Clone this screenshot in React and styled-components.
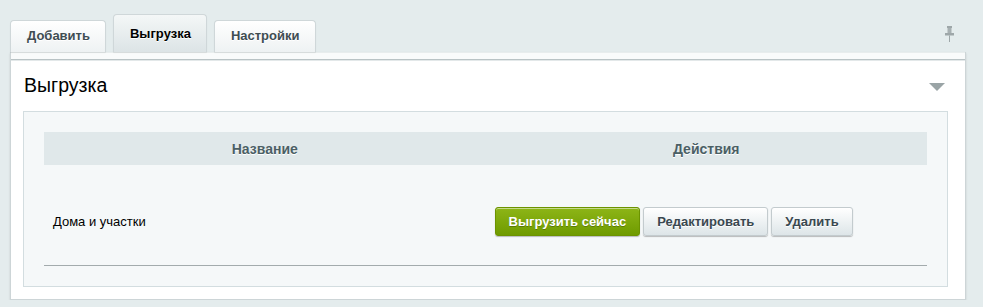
import React from 'react';
import styled, { createGlobalStyle } from 'styled-components';

const GlobalStyle = createGlobalStyle`
  html, body {
    margin: 0;
    padding: 0;
    background: #e4eced;
    font-family: 'Liberation Sans', Arial, sans-serif;
  }
`;

const Page = styled.div`
  padding: 14px 17px 0 10px;
`;

const TabBar = styled.div`
  display: flex;
  align-items: flex-end;
  gap: 7px;
  height: 38px;
`;

const Tab = styled.div`
  box-sizing: border-box;
  height: ${(p) => (p.$active ? 38 : 32)}px;
  padding: 0 15px ${(p) => (p.$active ? 1 : 3)}px 16px;
  display: flex;
  align-items: center;
  border: 1px solid #cfd7d9;
  border-bottom: none;
  border-radius: 4px 4px 0 0;
  background: ${(p) =>
    p.$active
      ? 'linear-gradient(to bottom, #f4f7f7 0%, #dce4e6 100%)'
      : 'linear-gradient(to bottom, #ffffff 0%, #eef2f3 100%)'};
  box-shadow: 0 1px 1px rgba(0, 0, 0, 0.08);
  font-size: 13px;
  font-weight: bold;
  color: ${(p) => (p.$active ? '#000' : '#3f4d52')};
  text-shadow: 0 1px #fff;
  cursor: pointer;
`;

const PinButton = styled.div`
  margin-left: auto;
  align-self: flex-start;
  margin-top: 12px;
  margin-right: 12px;
  width: 9px;
  height: 16px;
  display: flex;
`;

const Panel = styled.div`
  background: #fff;
  border: 1px solid #cdd5d7;
  border-top: none;
  box-shadow: 0 1px 2px rgba(0, 0, 0, 0.12);
`;

const PanelStrip = styled.div`
  height: 6px;
  background: #f9fbfb;
  border-top: 1px solid #e8eded;
  border-bottom: 1px solid #b9c3c5;
  box-shadow: 0 1px 0 #e3e8e9;
`;

const PanelHead = styled.div`
  display: flex;
  align-items: center;
  justify-content: space-between;
  height: 51px;
  padding: 0 20px 0 13px;
`;

const Title = styled.h2`
  margin: 0;
  margin-top: -1px;
  font-size: 19.5px;
  font-weight: normal;
  color: #000;
`;

const Collapse = styled.div`
  width: 0;
  height: 0;
  border-left: 8px solid transparent;
  border-right: 8px solid transparent;
  border-top: 8px solid #9aa4a6;
  margin-top: 2px;
`;

const Inner = styled.div`
  margin: 0 17px 12px 12px;
  padding: 20px;
  background: #f5f8f9;
  border: 1px solid #d3dde0;
`;

const Table = styled.table`
  width: 100%;
  border-collapse: collapse;
  font-size: 13px;
`;

const Th = styled.th`
  width: 50%;
  height: 33px;
  padding: 0 10px;
  background: #e0e8ea;
  color: #4b5f65;
  font-size: 14px;
  font-weight: bold;
  text-align: center;
  text-shadow: 0 1px #fff;
`;

const Td = styled.td`
  padding: 42px 9px 29px;
  border-bottom: 1px solid #a3abad;
  vertical-align: middle;
  color: #000;
`;

const Actions = styled.div`
  display: flex;
  gap: 3px;
`;

const Button = styled.button`
  box-sizing: border-box;
  height: 29px;
  padding: 0 ${(p) => (p.$primary ? 13 : 13)}px;
  border-radius: 3px;
  font-family: inherit;
  font-size: 13px;
  font-weight: bold;
  cursor: pointer;
  border: 1px solid ${(p) => (p.$primary ? '#6c9300' : '#c3cbce')};
  background: ${(p) =>
    p.$primary
      ? 'linear-gradient(to bottom, #8db517 0%, #6f9b00 100%)'
      : 'linear-gradient(to bottom, #ffffff 0%, #dde5e8 100%)'};
  color: ${(p) => (p.$primary ? '#fff' : '#3a4850')};
  text-shadow: ${(p) => (p.$primary ? '0 1px rgba(0,0,0,0.25)' : '0 1px #fff')};
  box-shadow: 0 1px 1px rgba(0, 0, 0, 0.25), inset 0 1px 0 rgba(255, 255, 255, 0.5);
`;

function PinIcon() {
  return (
    <svg width="9" height="16" viewBox="0 0 9 16">
      <rect x="2" y="0" width="5" height="2" fill="#9ea7a9" />
      <rect x="2.5" y="2" width="4" height="5" fill="#a7b0b2" />
      <rect x="0" y="7" width="9" height="2.5" fill="#9ea7a9" />
      <rect x="4" y="9.5" width="1" height="6.5" fill="#9ea7a9" />
    </svg>
  );
}

export default function App() {
  return (
    <>
      <GlobalStyle />
      <Page>
        <TabBar>
          <Tab>Добавить</Tab>
          <Tab $active>Выгрузка</Tab>
          <Tab>Настройки</Tab>
          <PinButton>
            <PinIcon />
          </PinButton>
        </TabBar>
        <Panel>
          <PanelStrip />
          <PanelHead>
            <Title>Выгрузка</Title>
            <Collapse />
          </PanelHead>
          <Inner>
            <Table>
              <thead>
                <tr>
                  <Th>Название</Th>
                  <Th>Действия</Th>
                </tr>
              </thead>
              <tbody>
                <tr>
                  <Td>Дома и участки</Td>
                  <Td>
                    <Actions>
                      <Button $primary>Выгрузить сейчас</Button>
                      <Button>Редактировать</Button>
                      <Button>Удалить</Button>
                    </Actions>
                  </Td>
                </tr>
              </tbody>
            </Table>
          </Inner>
        </Panel>
      </Page>
    </>
  );
}
